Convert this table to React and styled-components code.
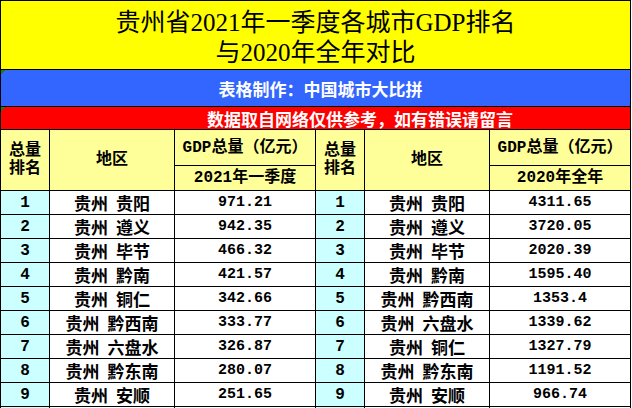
import React from "react"
import styled, { createGlobalStyle } from "styled-components"

const yellow = "#ffff00"
const blue = "#3366ff"
const red = "#ff0000"
const paleYellow = "#ffff99"
const paleCyan = "#ccffff"
const white = "#ffffff"
const ink = "#000000"

const cjk = `"Noto Sans CJK SC", sans-serif`
const mono = `"Liberation Mono", "Noto Sans CJK SC", monospace`

const left = [
  ["贵州 贵阳", "971.21"],
  ["贵州 遵义", "942.35"],
  ["贵州 毕节", "466.32"],
  ["贵州 黔南", "421.57"],
  ["贵州 铜仁", "342.66"],
  ["贵州 黔西南", "333.77"],
  ["贵州 六盘水", "326.87"],
  ["贵州 黔东南", "280.07"],
  ["贵州 安顺", "251.65"],
]

const right = [
  ["贵州 贵阳", "4311.65"],
  ["贵州 遵义", "3720.05"],
  ["贵州 毕节", "2020.39"],
  ["贵州 黔南", "1595.40"],
  ["贵州 黔西南", "1353.4"],
  ["贵州 六盘水", "1339.62"],
  ["贵州 铜仁", "1327.79"],
  ["贵州 黔东南", "1191.52"],
  ["贵州 安顺", "966.74"],
]

const GDPSheet = () => (
  <>
    <Global />
    <Sheet>
      <Title>
        <div>贵州省2021年一季度各城市GDP排名</div>
        <div>与2020年全年对比</div>
      </Title>
      <Banner color={blue}>表格制作：中国城市大比拼</Banner>
      <Banner color={red} offset="206px">数据取自网络仅供参考，如有错误请留言</Banner>

      <HeadCell tall>总量<br />排名</HeadCell>
      <HeadCell tall>地区</HeadCell>
      <HeadCell>GDP总量（亿元）</HeadCell>
      <HeadCell tall>总量<br />排名</HeadCell>
      <HeadCell tall>地区</HeadCell>
      <HeadCell>GDP总量（亿元）</HeadCell>
      <HeadCell>2021年一季度</HeadCell>
      <HeadCell>2020年全年</HeadCell>

      {left.map((row, i) => (
        <React.Fragment key={i}>
          <Rank>{i + 1}</Rank>
          <Region>{row[0]}</Region>
          <Amount>{row[1]}</Amount>
          <Rank>{i + 1}</Rank>
          <Region>{right[i][0]}</Region>
          <Amount>{right[i][1]}</Amount>
        </React.Fragment>
      ))}
      <Rank />
      <Region />
      <Amount />
      <Rank />
      <Region />
      <Amount />
    </Sheet>
  </>
)

const Global = createGlobalStyle`
  html, body {
    margin: 0;
    padding: 0;
    background: ${white};
  }
`

const Sheet = styled.div`
  display: grid;
  grid-template-columns: 48px 124px 140px 48px 124px 140px;
  grid-template-rows: 68px 36px 22px 35px 24px repeat(10, 23px);
  gap: 1px;
  padding: 1px;
  width: 631px;
  box-sizing: border-box;
  background: ${ink};
`

const Cell = styled.div`
  display: flex;
  align-items: center;
  justify-content: center;
  text-align: center;
  color: ${ink};
  white-space: nowrap;
`

const Title = styled(Cell)`
  grid-column: 1 / -1;
  flex-direction: column;
  padding-top: 6px;
  background: ${yellow};
  font-family: "Liberation Serif", ${cjk};
  font-size: 25px;
  line-height: 30px;
`

const Banner = styled(Cell)`
  grid-column: 1 / -1;
  justify-content: ${p => (p.offset ? "flex-start" : "center")};
  padding-left: ${p => p.offset || "10px"};
  background: linear-gradient(135deg, #1e7a1e 3px, transparent 3px), ${p => p.color};
  color: ${white};
  font-family: ${cjk};
  font-weight: 700;
  font-size: 17px;
`

const HeadCell = styled(Cell)`
  grid-row: ${p => (p.tall ? "span 2" : "auto")};
  background: ${paleYellow};
  font-family: ${mono};
  font-weight: 700;
  font-size: 16px;
  line-height: 18px;
`

const Rank = styled(Cell)`
  background: ${paleCyan};
  font-family: ${mono};
  font-weight: 700;
  font-size: 16px;
`

const Region = styled(Cell)`
  background: ${white};
  font-family: ${cjk};
  font-weight: 700;
  font-size: 17px;
  word-spacing: 4px;
`

const Amount = styled(Cell)`
  background: ${white};
  font-family: ${mono};
  font-weight: 700;
  font-size: 15px;
`

export default GDPSheet
